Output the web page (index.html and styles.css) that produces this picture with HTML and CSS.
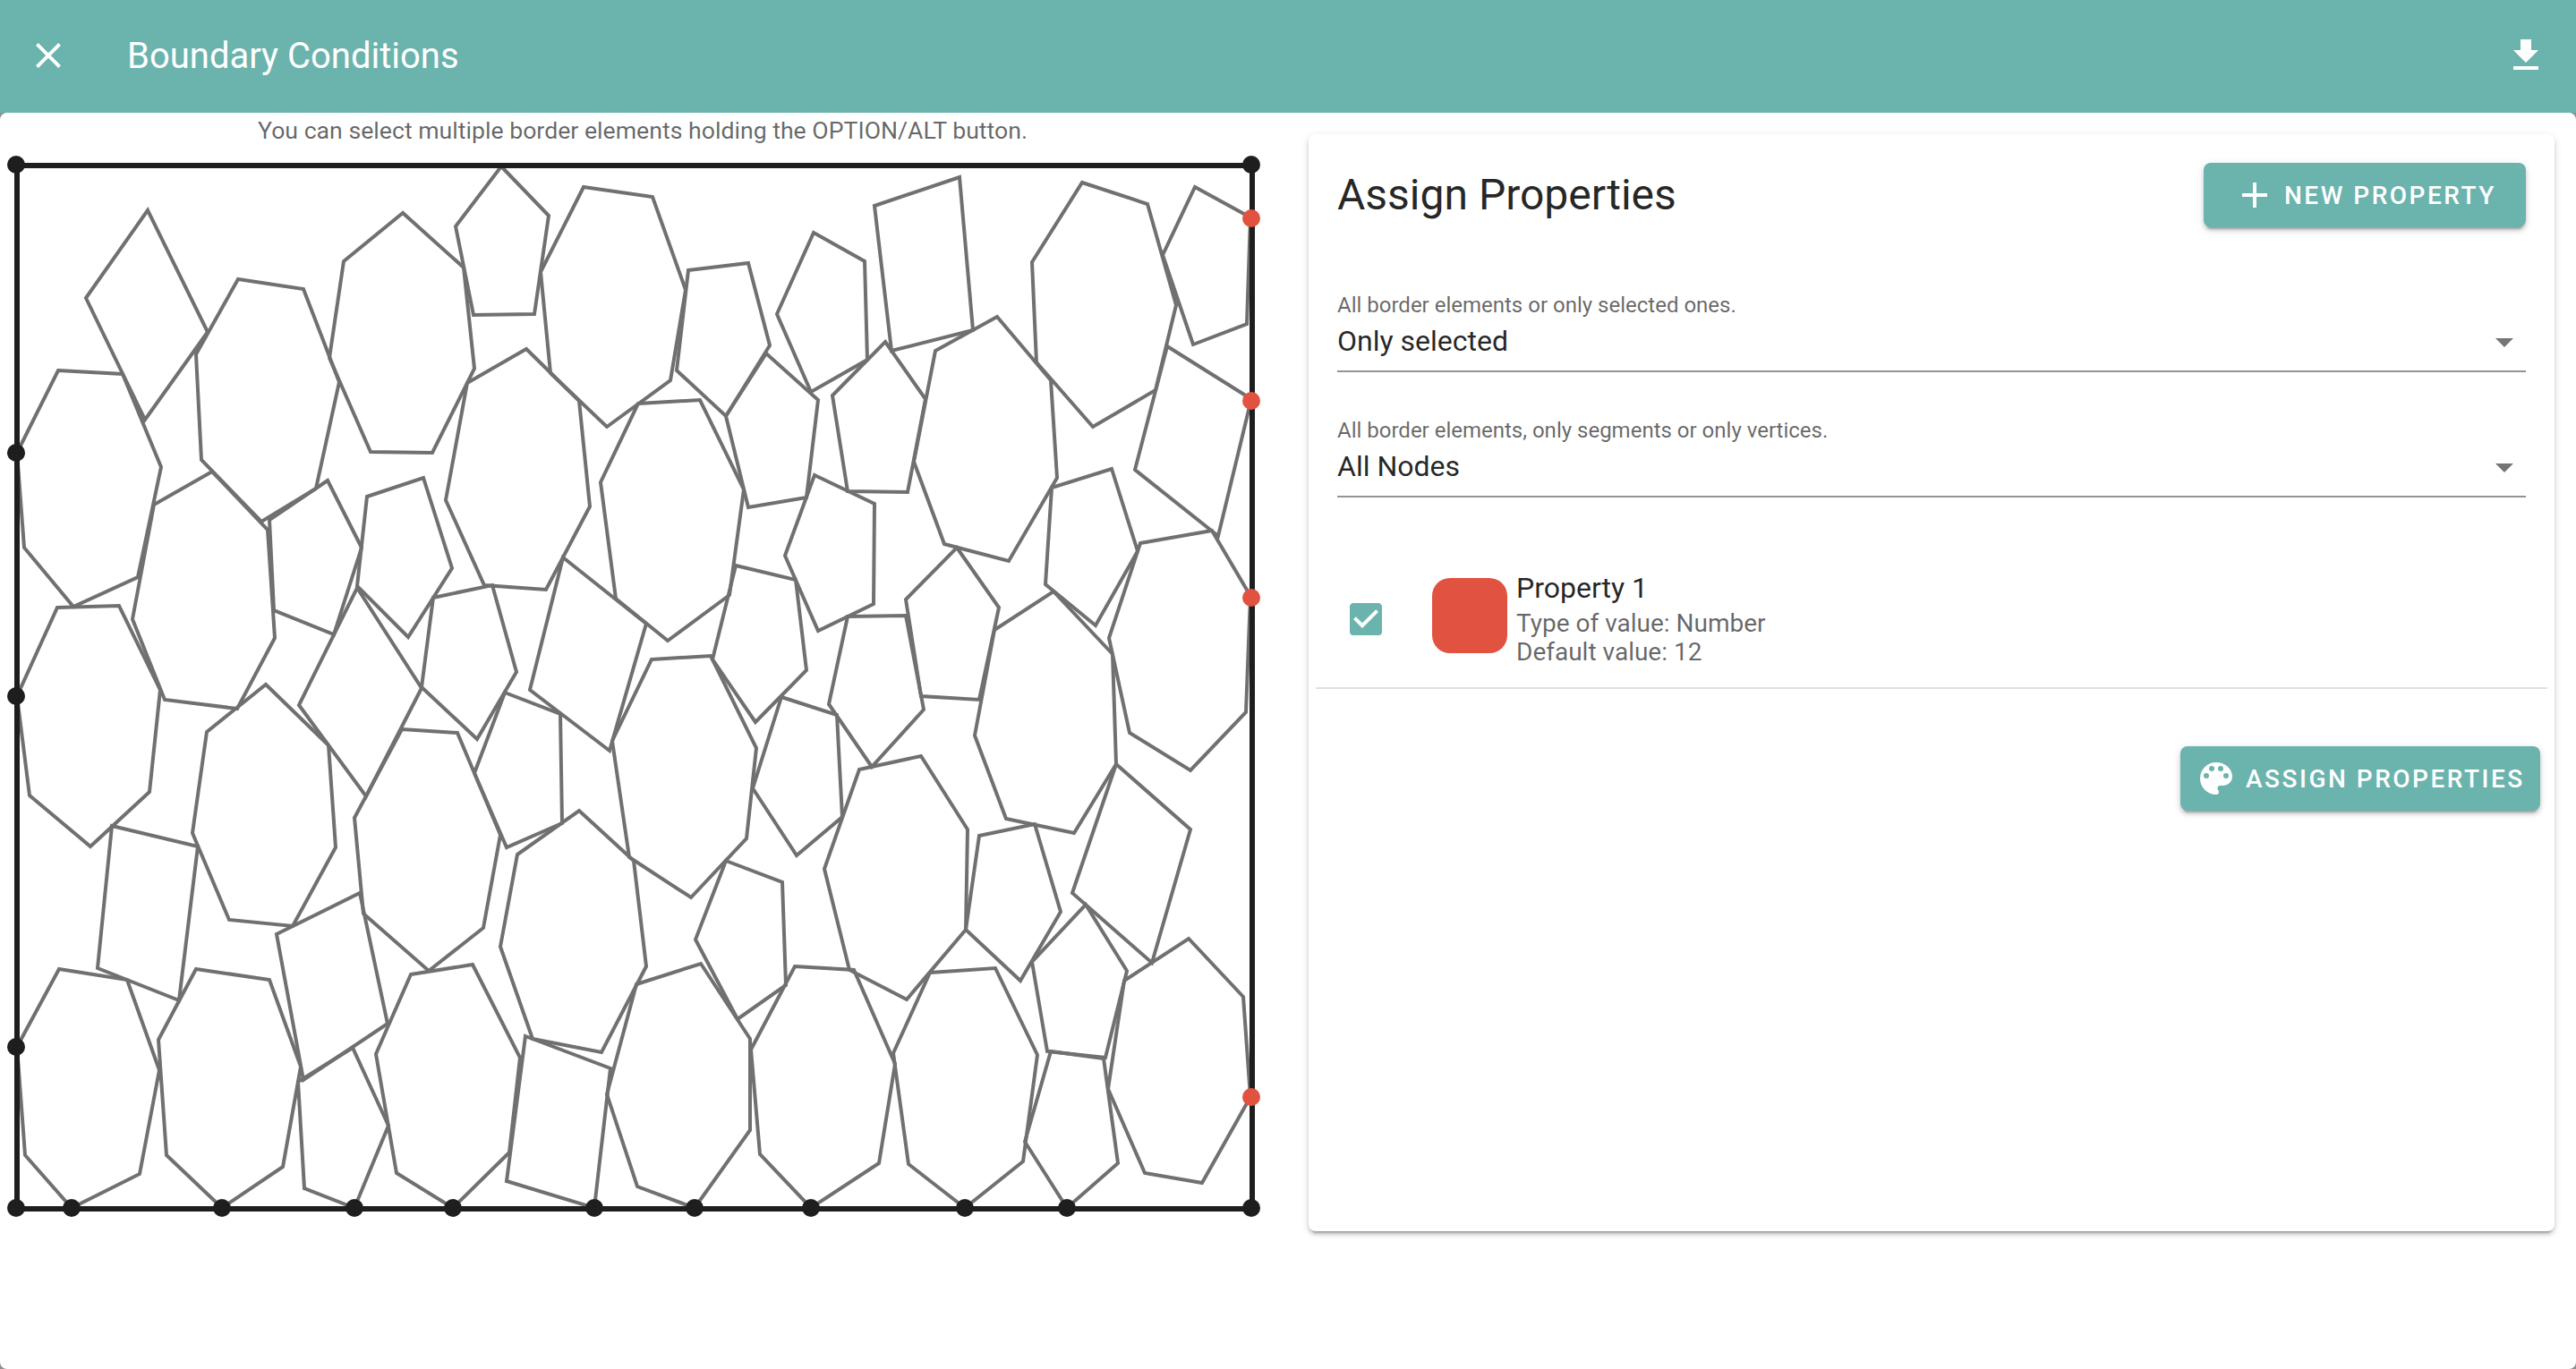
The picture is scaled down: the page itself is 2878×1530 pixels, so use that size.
FILE: index.html
```html
<!DOCTYPE html>
<html lang="en">
<head>
<meta charset="utf-8">
<title>Boundary Conditions</title>
<link rel="stylesheet" href="styles.css">
</head>
<body>
<header class="toolbar">
  <svg class="icon" viewBox="0 0 24 24"><path d="M19,6.41L17.59,5L12,10.59L6.41,5L5,6.41L10.59,12L5,17.59L6.41,19L12,13.41L17.59,19L19,17.59L13.41,12L19,6.41Z"/></svg>
  <h1 class="toolbar-title">Boundary Conditions</h1>
  <svg class="icon" viewBox="0 0 24 24"><path d="M5,20H19V18H5M19,9H15V3H9V9H5L12,16L19,9Z"/></svg>
</header>
<main class="sheet">
  <section class="drawing">
    <p class="hint">You can select multiple border elements holding the OPTION/ALT button.</p>
    <svg class="mesh" viewBox="0 168 1436 1202">
      <g class="cells">
        <polygon points="165,235 232,371 162,469 96,333"/>
        <polygon points="65,414 137,418 180,522 154,645 82,678 27,612 19,506"/>
        <polygon points="266,312 339,323 379,427 353,546 292,583 225,514 219,396"/>
        <polygon points="450,238 384,292 368,400 414,505 483,506 530,412 518,299"/>
        <polygon points="560,186 613,241 597,351 529,352 509,253"/>
        <polygon points="652,209 729,220 766,324 749,425 678,477 615,417 604,304"/>
        <polygon points="769,302 836,294 860,386 811,465 756,414"/>
        <polygon points="909,260 966,292 969,402 906,438 868,351"/>
        <polygon points="977,230 1072,198 1087,369 996,392"/>
        <polygon points="1209,204 1282,228 1314,341 1291,436 1221,477 1158,405 1153,293"/>
        <polygon points="1335,209 1397,243 1393,362 1333,385 1299,285"/>
        <polygon points="1304,387 1398,446 1361,599 1268,525"/>
        <polygon points="1114,354 1174,425 1181,534 1127,627 1055,608 1021,516 1045,392"/>
        <polygon points="989,382 1034,446 1014,550 947,549 930,442"/>
        <polygon points="856,395 914,447 901,556 836,567 811,465"/>
        <polygon points="588,390 647,448 659,566 610,659 541,654 498,559 522,428"/>
        <polygon points="713,451 782,447 831,547 815,665 746,716 688,669 671,539"/>
        <polygon points="237,527 299,592 307,713 265,792 184,782 148,692 172,564"/>
        <polygon points="366,537 404,612 373,709 306,682 301,581"/>
        <polygon points="410,555 473,534 505,635 456,712 399,655"/>
        <polygon points="484,668 550,654 577,751 533,826 471,768"/>
        <polygon points="399,657 471,769 409,890 334,788"/>
        <polygon points="297,765 367,833 375,947 327,1035 256,1028 215,931 231,818"/>
        <polygon points="64,679 133,677 179,771 167,885 101,946 33,889 19,778"/>
        <polygon points="629,623 722,697 681,839 592,771"/>
        <polygon points="822,632 889,648 901,749 844,807 796,737"/>
        <polygon points="728,737 794,733 845,836 834,937 772,1003 703,958 684,828"/>
        <polygon points="910,531 977,563 976,675 914,705 877,621"/>
        <polygon points="947,689 1012,688 1032,793 974,857 926,787"/>
        <polygon points="1069,612 1116,679 1094,782 1029,778 1012,670"/>
        <polygon points="1177,661 1243,731 1247,854 1200,931 1124,915 1089,822 1111,704"/>
        <polygon points="1242,524 1271,616 1224,699 1168,653 1175,545"/>
        <polygon points="1274,607 1354,593 1397,666 1392,796 1330,861 1262,819 1239,713"/>
        <polygon points="564,774 626,798 628,920 566,947 530,864"/>
        <polygon points="449,815 511,819 559,933 540,1037 479,1085 406,1021 396,914"/>
        <polygon points="647,906 708,962 722,1080 672,1176 595,1161 559,1058 578,955"/>
        <polygon points="873,779 935,799 941,913 890,956 841,881"/>
        <polygon points="960,860 1029,845 1081,927 1079,1039 1013,1117 949,1084 921,971"/>
        <polygon points="1094,934 1156,921 1185,1019 1140,1096 1079,1039"/>
        <polygon points="1247,854 1330,927 1287,1076 1198,998"/>
        <polygon points="125,923 221,946 200,1118 109,1082"/>
        <polygon points="66,1083 142,1095 178,1196 156,1312 80,1350 28,1291 19,1170"/>
        <polygon points="219,1083 301,1095 336,1192 316,1304 248,1350 186,1291 177,1162"/>
        <polygon points="309,1044 402,998 433,1144 339,1207"/>
        <polygon points="333,1209 394,1171 434,1258 396,1350 340,1328"/>
        <polygon points="459,1089 528,1078 581,1182 569,1288 506,1350 443,1311 420,1178"/>
        <polygon points="587,1158 682,1194 664,1350 566,1320"/>
        <polygon points="711,1100 783,1077 838,1161 838,1263 776,1350 712,1326 678,1223"/>
        <polygon points="811,962 874,986 878,1101 824,1139 777,1050"/>
        <polygon points="888,1080 954,1084 1000,1189 982,1300 906,1350 849,1290 839,1173"/>
        <polygon points="1039,1087 1112,1082 1159,1179 1143,1298 1078,1350 1015,1301 998,1177"/>
        <polygon points="1213,1011 1259,1085 1235,1182 1170,1175 1153,1075"/>
        <polygon points="1174,1175 1233,1183 1249,1300 1192,1350 1145,1276"/>
        <polygon points="1256,1096 1328,1049 1389,1114 1397,1226 1343,1322 1279,1311 1238,1217"/>
      </g>
      <rect class="frame" x="19" y="185" width="1380" height="1166"/>
      <g class="nodes">
        <circle cx="18" cy="184" r="10"/><circle cx="18" cy="506" r="10"/><circle cx="18" cy="778" r="10"/><circle cx="18" cy="1170" r="10"/><circle cx="18" cy="1350" r="10"/>
        <circle cx="80" cy="1350" r="10"/><circle cx="248" cy="1350" r="10"/><circle cx="396" cy="1350" r="10"/><circle cx="506" cy="1350" r="10"/><circle cx="664" cy="1350" r="10"/><circle cx="776" cy="1350" r="10"/><circle cx="906" cy="1350" r="10"/><circle cx="1078" cy="1350" r="10"/><circle cx="1192" cy="1350" r="10"/><circle cx="1398" cy="1350" r="10"/>
        <circle cx="1398" cy="184" r="10"/>
      </g>
      <g class="nodes-selected">
        <circle cx="1398" cy="244" r="10"/><circle cx="1398" cy="448" r="10"/><circle cx="1398" cy="668" r="10"/><circle cx="1398" cy="1226" r="10"/>
      </g>
    </svg>
  </section>
  <section class="card">
    <div class="card-head">
      <h2 class="card-title">Assign Properties</h2>
      <button class="btn btn-new"><svg class="icon" viewBox="0 0 24 24"><path d="M19,13H13V19H11V13H5V11H11V5H13V11H19V13Z"/></svg><span class="btn-label">NEW PROPERTY</span></button>
    </div>
    <div class="field">
      <label class="field-label">All border elements or only selected ones.</label>
      <div class="field-value"><span class="field-text">Only selected</span><svg class="icon caret" viewBox="0 0 24 24"><path d="M7,10L12,15L17,10H7Z"/></svg></div>
    </div>
    <div class="field">
      <label class="field-label">All border elements, only segments or only vertices.</label>
      <div class="field-value"><span class="field-text">All Nodes</span><svg class="icon caret" viewBox="0 0 24 24"><path d="M7,10L12,15L17,10H7Z"/></svg></div>
    </div>
    <div class="property">
      <svg class="icon check" viewBox="0 0 24 24"><path d="M10,17L5,12L6.41,10.58L10,14.17L17.59,6.58L19,8M19,3H5C3.89,3 3,3.89 3,5V19A2,2 0 0,0 5,21H19A2,2 0 0,0 21,19V5C21,3.89 20.1,3 19,3Z"/></svg>
      <div class="swatch"></div>
      <div class="property-text">
        <div class="property-name">Property 1</div>
        <div class="property-meta">Type of value: Number</div>
        <div class="property-meta">Default value: 12</div>
      </div>
    </div>
    <div class="card-actions">
      <button class="btn btn-assign"><svg class="icon" viewBox="0 0 24 24"><path d="M17.5,12A1.5,1.5 0 0,1 16,10.5A1.5,1.5 0 0,1 17.5,9A1.5,1.5 0 0,1 19,10.5A1.5,1.5 0 0,1 17.5,12M14.5,8A1.5,1.5 0 0,1 13,6.5A1.5,1.5 0 0,1 14.5,5A1.5,1.5 0 0,1 16,6.5A1.5,1.5 0 0,1 14.5,8M9.5,8A1.5,1.5 0 0,1 8,6.5A1.5,1.5 0 0,1 9.5,5A1.5,1.5 0 0,1 11,6.5A1.5,1.5 0 0,1 9.5,8M6.5,12A1.5,1.5 0 0,1 5,10.5A1.5,1.5 0 0,1 6.5,9A1.5,1.5 0 0,1 8,10.5A1.5,1.5 0 0,1 6.5,12M12,3A9,9 0 0,0 3,12A9,9 0 0,0 12,21A1.5,1.5 0 0,0 13.5,19.5C13.5,19.11 13.35,18.76 13.11,18.5C12.88,18.23 12.73,17.88 12.73,17.5A1.5,1.5 0 0,1 14.23,16H16A5,5 0 0,0 21,11C21,6.58 16.97,3 12,3Z"/></svg><span class="btn-label">ASSIGN PROPERTIES</span></button>
    </div>
  </section>
</main>
</body>
</html>
```
FILE: styles.css
```css
* { box-sizing: border-box; }
body {
  margin: 0;
  height: 1530px;
  display: flex;
  flex-direction: column;
  overflow: hidden;
  background: #8f8f8f;
  font-family: Roboto, sans-serif;
  color: rgba(0, 0, 0, .87);
}
h1, h2, p { margin: 0; font-weight: 400; }
.icon { display: block; width: 48px; height: 48px; flex: none; fill: currentColor; }

.toolbar {
  flex: none;
  height: 126px;
  padding: 0 32px 2px 30px;
  display: flex;
  align-items: center;
  background: #6bb3ad;
  color: #fff;
}
.toolbar-title { flex: 1; padding: 2px 0 0 64px; font-size: 40px; line-height: 60px; }

.sheet {
  flex: 1;
  display: flex;
  align-items: flex-start;
  justify-content: space-between;
  padding-right: 24px;
  border-radius: 8px;
  background: #fff;
}
.drawing { width: 1436px; display: flex; flex-direction: column; }
.hint {
  height: 42px;
  line-height: 40px;
  font-size: 26.66px;
  text-align: center;
  color: rgba(0, 0, 0, .6);
}
.mesh { display: block; width: 1436px; height: 1202px; }
.cells { fill: none; stroke: #707070; stroke-width: 4; }
.frame { fill: none; stroke: #1e1e1e; stroke-width: 6; }
.nodes { fill: #1e1e1e; }
.nodes-selected { fill: #e15241; }

.card {
  width: 1392px;
  height: 1226px;
  margin-top: 24px;
  padding: 32px 8px;
  border-radius: 8px;
  background: #fff;
  box-shadow: 0 6px 2px -4px rgba(0, 0, 0, .2), 0 4px 4px rgba(0, 0, 0, .14), 0 2px 10px rgba(0, 0, 0, .12);
}
.card-head {
  display: flex;
  align-items: center;
  justify-content: space-between;
  margin: 0 24px 62px;
}
.card-title { font-size: 48px; line-height: 64px; }

.btn {
  display: flex;
  align-items: center;
  height: 72px;
  border: 0;
  border-radius: 8px;
  background: #6bb3ad;
  color: #fff;
  font: 500 28px/36px Roboto, sans-serif;
  letter-spacing: 2.5px;
  white-space: nowrap;
  box-shadow: 0 6px 2px -4px rgba(0, 0, 0, .2), 0 4px 4px rgba(0, 0, 0, .14), 0 2px 10px rgba(0, 0, 0, .12);
}
.btn-new { width: 360px; padding: 0 0 0 33px; gap: 9px; }
.btn-assign { width: 402px; padding: 0 0 0 16px; gap: 9px; }
.btn-label { padding-top: 2px; }

.field {
  display: flex;
  flex-direction: column;
  height: 100px;
  margin: 0 24px 40px;
  border-bottom: 2px solid #949494;
}
.field-label { font-size: 24px; line-height: 50px; color: rgba(0, 0, 0, .6); }
.field-value {
  display: flex;
  align-items: center;
  justify-content: space-between;
  height: 32px;
  font-size: 32px;
}
.field-text { padding-bottom: 2px; }
.caret { color: rgba(0, 0, 0, .54); }

.property {
  display: flex;
  height: 174px;
  padding-left: 32px;
  border-bottom: 2px solid #e0e0e0;
}
.check { margin-top: 72px; color: #6bb3ad; }
.swatch { width: 84px; height: 84px; margin: 50px 10px 0 50px; border-radius: 20px; background: #e15241; }
.property-text { padding-top: 42px; }
.property-name { font-size: 32px; line-height: 38px; margin-bottom: 5px; }
.property-meta { font-size: 28px; line-height: 32px; color: rgba(0, 0, 0, .6); }

.card-actions { display: flex; justify-content: flex-end; padding: 64px 8px 0 0; }
```
